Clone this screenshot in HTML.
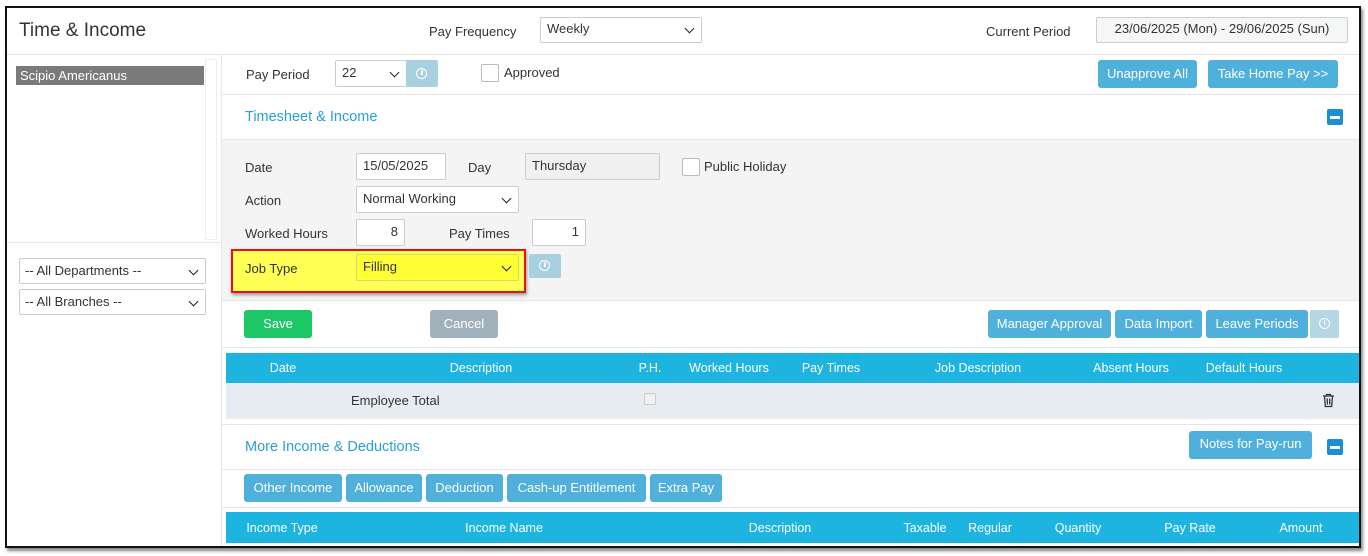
<!DOCTYPE html>
<html><head><meta charset="utf-8"><style>
*{box-sizing:border-box;margin:0;padding:0}
body{width:1368px;height:556px;background:#fff;font-family:"Liberation Sans",sans-serif;font-size:13px;color:#333;position:relative;overflow:hidden}
.a{position:absolute}
.frame{left:5px;top:6px;width:1356px;height:542px;border:2px solid #111;box-shadow:2px 3px 3px #888;overflow:hidden;background:#fff}
.hl{position:absolute;height:1px;background:#e6e6e6}
.t{position:absolute;white-space:nowrap;line-height:16px}
.inp{position:absolute;border:1px solid #ccc;border-radius:2px;background:#fff;padding:0 6px;line-height:24px;white-space:nowrap}
.chev{position:absolute;right:8px;top:8px;width:7px;height:7px;border-right:1.6px solid #222;border-bottom:1.6px solid #222;transform:rotate(45deg)}
.btn{position:absolute;background:#4fb0dc;color:#fff;border-radius:3px;text-align:center;white-space:nowrap;font-size:13px}
.info{position:absolute;background:#a9d0e0;border-radius:2px}
.info:after{content:"";position:absolute;left:50%;top:50%;width:9px;height:9px;margin:-6px 0 0 -6px;border:1.3px solid #fff;border-radius:50%}
.info:before{content:"";position:absolute;left:50%;top:50%;width:1.4px;height:5px;margin:-4px 0 0 -0.7px;background:#fff}
.cb{position:absolute;border:1px solid #bbb;border-radius:2px;background:#fff}
.th{position:absolute;background:#1eb4e0;color:#fff}
.th span{position:absolute;top:50%;transform:translate(-50%,-50%);white-space:nowrap;font-size:12.5px}
.minus{position:absolute;width:16px;height:16px;background:#1a8fd6;border-radius:2px}
.minus:after{content:"";position:absolute;left:3px;top:7px;width:10px;height:2.5px;background:#fff}
.blue{color:#2a9fd6;font-size:14.5px}
</style></head><body>
<div class="a frame">
<div style="position:absolute;left:-7px;top:-8px;width:1368px;height:556px">
<div class="t" style="left:19px;top:21px;font-size:19px;line-height:20px;color:#333">Time &amp; Income</div>
<div class="t" style="left:429px;top:24px">Pay Frequency</div>
<div class="inp" style="left:540px;top:17px;width:162px;height:26px;line-height:22px">Weekly<div class="chev" style="top:7px"></div></div>
<div class="t" style="left:986px;top:24px">Current Period</div>
<div class="inp" style="left:1096px;top:17px;width:252px;height:26px;line-height:22px;background:#f5f6f7;text-align:center">23/06/2025 (Mon) - 29/06/2025 (Sun)</div>
<div class="hl" style="left:0;top:54px;width:1368px"></div>

<div class="a" style="left:221px;top:54px;width:1px;height:500px;background:#e6e6e6"></div>
<div class="a" style="left:16px;top:66px;width:188px;height:19px;background:#7a7a7a;color:#fff;padding-left:4px;line-height:19px">Scipio Americanus</div>
<div class="a" style="left:205px;top:59px;width:12px;height:181px;border:1px solid #eee"></div>
<div class="hl" style="left:0;top:242px;width:221px"></div>
<div class="inp" style="left:19px;top:258px;width:187px;height:26px;line-height:24px;padding-left:5px">-- All Departments --<div class="chev"></div></div>
<div class="inp" style="left:19px;top:289px;width:187px;height:26px;line-height:24px;padding-left:5px">-- All Branches --<div class="chev"></div></div>

<div class="t" style="left:246px;top:67px">Pay Period</div>
<div class="inp" style="left:335px;top:60px;width:72px;height:27px;line-height:24px">22<div class="chev"></div></div>
<div class="info" style="left:406px;top:60px;width:32px;height:27px"></div>
<div class="cb" style="left:481px;top:64px;width:18px;height:18px"></div>
<div class="t" style="left:504px;top:65px">Approved</div>
<div class="btn" style="left:1098px;top:60px;width:99px;height:28px;line-height:28px">Unapprove All</div>
<div class="btn" style="left:1208px;top:60px;width:130px;height:28px;line-height:28px">Take Home Pay &gt;&gt;</div>
<div class="hl" style="left:222px;top:94px;width:1146px"></div>
<div class="t blue" style="left:245px;top:109px">Timesheet &amp; Income</div>
<div class="minus" style="left:1327px;top:109px"></div>
<div class="hl" style="left:222px;top:139px;width:1146px"></div>

<div class="a" style="left:222px;top:140px;width:1146px;height:160px;background:#f4f4f4"></div>
<div class="t" style="left:245px;top:160px">Date</div>
<div class="inp" style="left:356px;top:153px;width:90px;height:27px">15/05/2025</div>
<div class="t" style="left:468px;top:160px">Day</div>
<div class="inp" style="left:525px;top:153px;width:135px;height:27px;background:#f0f0f0">Thursday</div>
<div class="cb" style="left:682px;top:158px;width:18px;height:18px"></div>
<div class="t" style="left:704px;top:159px">Public Holiday</div>
<div class="t" style="left:245px;top:193px">Action</div>
<div class="inp" style="left:356px;top:186px;width:163px;height:27px">Normal Working<div class="chev"></div></div>
<div class="t" style="left:245px;top:226px">Worked Hours</div>
<div class="inp" style="left:356px;top:219px;width:49px;height:27px;text-align:right">8</div>
<div class="t" style="left:449px;top:226px">Pay Times</div>
<div class="inp" style="left:532px;top:219px;width:54px;height:27px;text-align:right">1</div>
<div class="a" style="left:231px;top:249px;width:295px;height:44px;border:2px solid #e8101a;background:#ffff55;box-shadow:1px 2px 3px #999"></div>
<div class="t" style="left:245px;top:261px">Job Type</div>
<div class="inp" style="left:356px;top:254px;width:163px;height:27px;background:#ffff33;border-color:#d8d870">Filling<div class="chev"></div></div>
<div class="info" style="left:529px;top:254px;width:32px;height:24px"></div>
<div class="hl" style="left:222px;top:300px;width:1146px"></div>

<div class="btn" style="left:244px;top:310px;width:68px;height:28px;line-height:28px;background:#1ec765">Save</div>
<div class="btn" style="left:430px;top:310px;width:68px;height:28px;line-height:28px;background:#a1b1bc">Cancel</div>
<div class="btn" style="left:988px;top:310px;width:123px;height:28px;line-height:28px">Manager Approval</div>
<div class="btn" style="left:1115px;top:310px;width:87px;height:28px;line-height:28px">Data Import</div>
<div class="btn" style="left:1206px;top:310px;width:102px;height:28px;line-height:28px">Leave Periods</div>
<div class="info" style="left:1310px;top:310px;width:29px;height:28px;background:#b5d6e4"></div>
<div class="hl" style="left:222px;top:347px;width:1146px"></div>

<div class="th" style="left:226px;top:353px;width:1142px;height:30px">
<span style="left:57px">Date</span><span style="left:255px">Description</span><span style="left:424px">P.H.</span><span style="left:503px">Worked Hours</span><span style="left:605px">Pay Times</span><span style="left:752px">Job Description</span><span style="left:905px">Absent Hours</span><span style="left:1018px">Default Hours</span>
</div>
<div class="a" style="left:226px;top:383px;width:1142px;height:36px;background:#e6ecef"></div>
<div class="t" style="left:351px;top:393px">Employee Total</div>
<div class="cb" style="left:644px;top:393px;width:12px;height:12px;border-color:#ccc;background:#f0f0f0"></div>
<svg class="a" style="left:1322px;top:393px" width="13" height="15" viewBox="0 0 13 15"><path d="M1 3h11M4.5 3V1.5h4V3M2.5 3l.8 10.5h6.4L10.5 3M5.3 5.5v6M7.7 5.5v6" stroke="#333" stroke-width="1.3" fill="none"/></svg>
<div class="hl" style="left:222px;top:424px;width:1146px"></div>
<div class="t blue" style="left:245px;top:439px">More Income &amp; Deductions</div>
<div class="btn" style="left:1189px;top:431px;width:123px;height:28px;line-height:26px">Notes for Pay-run</div>
<div class="minus" style="left:1327px;top:439px"></div>
<div class="hl" style="left:222px;top:469px;width:1146px"></div>
<div class="btn" style="left:244px;top:474px;width:98px;height:28px;line-height:28px">Other Income</div>
<div class="btn" style="left:346px;top:474px;width:76px;height:28px;line-height:28px">Allowance</div>
<div class="btn" style="left:426px;top:474px;width:77px;height:28px;line-height:28px">Deduction</div>
<div class="btn" style="left:507px;top:474px;width:139px;height:28px;line-height:28px">Cash-up Entitlement</div>
<div class="btn" style="left:650px;top:474px;width:72px;height:28px;line-height:28px">Extra Pay</div>
<div class="hl" style="left:222px;top:507px;width:1146px"></div>
<div class="th" style="left:226px;top:512px;width:1142px;height:31px">
<span style="left:56px">Income Type</span><span style="left:278px">Income Name</span><span style="left:554px">Description</span><span style="left:699px">Taxable</span><span style="left:764px">Regular</span><span style="left:852px">Quantity</span><span style="left:964px">Pay Rate</span><span style="left:1075px">Amount</span>
</div>
</div>
</div>
</body></html>
